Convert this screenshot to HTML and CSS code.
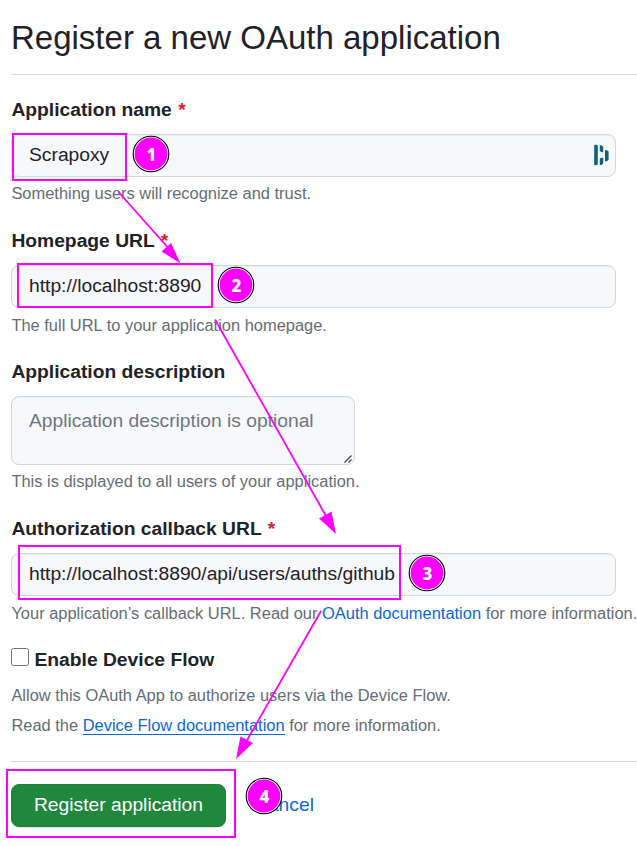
FILE: index.html
```html
<!DOCTYPE html>
<html lang="en">
<head>
<meta charset="utf-8">
<title>Register a new OAuth application</title>
<link rel="stylesheet" href="styles.css">
</head>
<body>
<main class="page">
  <h1 class="title">Register a new OAuth application</h1>
  <form class="form">
    <div class="group">
      <label class="label" for="name">Application name <span class="req">*</span></label>
      <div class="field">
        <input class="input" id="name" type="text" value="Scrapoxy">
        <svg class="vault" viewBox="0 0 16 22" width="16" height="22"><path d="M1.200 1.500Q1.200 .8 2.200 .8H3.600L4.800 1.800V20.200L3.600 21.200H2.200Q1.200 21.200 1.200 20.500ZM6.800 1.200H8.300L10.200 2.800V8.600L6.800 7.200ZM12 6.200H14L15.600 7.500V15.800L14 17.200H12ZM6.800 14.500L10.200 13.500V19.400L8.500 21H6.800Z"/></svg>
      </div>
      <p class="hint">Something users will recognize and trust.</p>
    </div>
    <div class="group">
      <label class="label" for="home">Homepage URL <span class="req">*</span></label>
      <input class="input" id="home" type="text" value="http://localhost:8890">
      <p class="hint low">The full URL to your application homepage.</p>
    </div>
    <div class="group">
      <label class="label" for="desc">Application description</label>
      <div class="area-wrap">
        <textarea class="input area" id="desc" placeholder="Application description is optional"></textarea>
        <svg class="grip" viewBox="0 0 10 10" width="10" height="10"><path d="M1.500 8.500L8.500 1.500M5.500 8.500L8.500 5.500"/></svg>
      </div>
      <p class="hint">This is displayed to all users of your application.</p>
    </div>
    <div class="group">
      <label class="label" for="callback">Authorization callback URL <span class="req">*</span></label>
      <input class="input" id="callback" type="text" value="http://localhost:8890/api/users/auths/github">
      <p class="hint low">Your application’s callback URL. Read our <a class="link" href="#">OAuth documentation</a> for more information.</p>
    </div>
    <div class="device">
      <label class="label check-label"><input class="check" type="checkbox">Enable Device Flow</label>
      <p class="hint para">Allow this OAuth App to authorize users via the Device Flow.</p>
      <p class="hint para">Read the <a class="link underlined" href="#">Device Flow documentation</a> for more information.</p>
    </div>
    <div class="actions">
      <button class="submit" type="button">Register application</button>
      <a class="link cancel" href="#">Cancel</a>
    </div>
  </form>
</main>
<svg class="notes" viewBox="0 0 637 846" width="637" height="846">
  <g class="boxes">
    <rect x="13" y="134" width="113" height="46"/>
    <rect x="18" y="264" width="194" height="43"/>
    <rect x="19" y="546" width="381" height="53"/>
    <rect x="7" y="770" width="228" height="67"/>
  </g>
  <g class="arrows">
    <path d="M118.500 192L171 251M215 319.500L326 516M321 611L246 742"/>
    <path class="head" d="M180.500 263.500L161.500 251.500L171 243ZM336 534L319 518.500L331.500 511.500ZM236 759L240.500 736.500L253 743Z"/>
  </g>
  <g class="badges">
    <circle class="outer" cx="151" cy="154" r="17.800"/><circle class="inner" cx="151" cy="154" r="16.400"/>
    <circle class="outer" cx="236" cy="285" r="17.800"/><circle class="inner" cx="236" cy="285" r="16.400"/>
    <circle class="outer" cx="427" cy="573" r="17.800"/><circle class="inner" cx="427" cy="573" r="16.400"/>
    <circle class="outer" cx="264" cy="796" r="17.800"/><circle class="inner" cx="264" cy="796" r="16.400"/>
    <text x="151.500" y="161">1</text>
    <text x="236.500" y="292">2</text>
    <text x="427.500" y="580">3</text>
    <text x="264.500" y="803">4</text>
  </g>
</svg>
</body>
</html>
```
FILE: styles.css
```css
* { box-sizing: border-box; }
html, body { margin: 0; overflow: hidden; }
body {
  position: relative;
  height: 846px;
  background: #fff;
  color: #1f2328;
  font-family: "Liberation Sans", Arial, sans-serif;
  font-size: 19.25px;
}
.page { padding: 14px 0 0 11px; }
.title {
  height: 61px;
  margin: 0 0 21px;
  border-bottom: 1px solid #d4d8e0;
  font-size: 33px;
  font-weight: 400;
  line-height: 48px;
}
.group { height: 131px; margin: 0; }
.group:has(.area) { height: 157px; }
.label {
  display: block;
  height: 28px;
  margin-bottom: 10px;
  padding-left: .4px;
  font-weight: 700;
  line-height: 28px;
}
.req { margin-left: 1px; color: #d1242f; }
.field { position: relative; width: 605px; }
.input {
  display: block;
  width: 605px;
  height: 43px;
  padding: 0 17px 2px;
  border: 1px solid #d0d7de;
  border-radius: 8px;
  background: #f6f8fa;
  box-shadow: inset 0 1px 0 rgba(208, 215, 222, .2);
  color: #1f2328;
  font: inherit;
  line-height: 28px;
  outline: none;
}
.vault { position: absolute; top: 10px; right: 7px; fill: #0e6273; }
.area-wrap { position: relative; width: 344px; }
.area { width: 344px; height: 69px; padding: 10px 17px; resize: none; overflow: hidden; }
.area::placeholder { color: #6e7781; opacity: 1; }
.grip { position: absolute; right: 2px; bottom: 1px; fill: none; stroke: #444; stroke-width: 1.3; }
.hint {
  margin: 4px 0 0;
  padding-left: .4px;
  color: #656d76;
  font-size: 16.45px;
  line-height: 24px;
  white-space: nowrap;
}
.low { margin-top: 5px; }
.link { color: #0969da; text-decoration: none; }
.underlined { border-bottom: 1px solid #0969da; }
.device { height: 116px; border-bottom: 1px solid #d4d8e0; }
.check-label { display: flex; align-items: flex-start; margin-bottom: 9px; padding-left: 0; }
.check { width: 18px; height: 18px; margin: 2px 5.5px 0 0; }
.hint.para { margin: 0 0 6px; }
.actions { display: flex; align-items: center; gap: 28px; margin-top: 22px; }
.submit {
  width: 215px;
  height: 43px;
  padding: 0 0 2px;
  border: 1px solid #1f7f39;
  border-radius: 8px;
  background: #1f883d;
  box-shadow: 0 1px 0 rgba(31, 35, 40, .1);
  color: #fff;
  font: inherit;
}
.cancel { line-height: 28px; padding-bottom: 2px; }
.notes { position: absolute; top: 0; left: 0; pointer-events: none; }
.boxes { fill: none; stroke: #f0f; stroke-width: 2; }
.arrows { fill: none; stroke: #f0f; stroke-width: 1.8; }
.head { fill: #f0f; stroke: none; }
.outer { fill: #fff; stroke: #000; stroke-width: 1.1; }
.inner { fill: #f0f; }
.badges text {
  fill: #fff;
  font-family: "Noto Sans", "Open Sans", sans-serif;
  font-size: 17px;
  font-weight: 800;
  text-anchor: middle;
}
```
